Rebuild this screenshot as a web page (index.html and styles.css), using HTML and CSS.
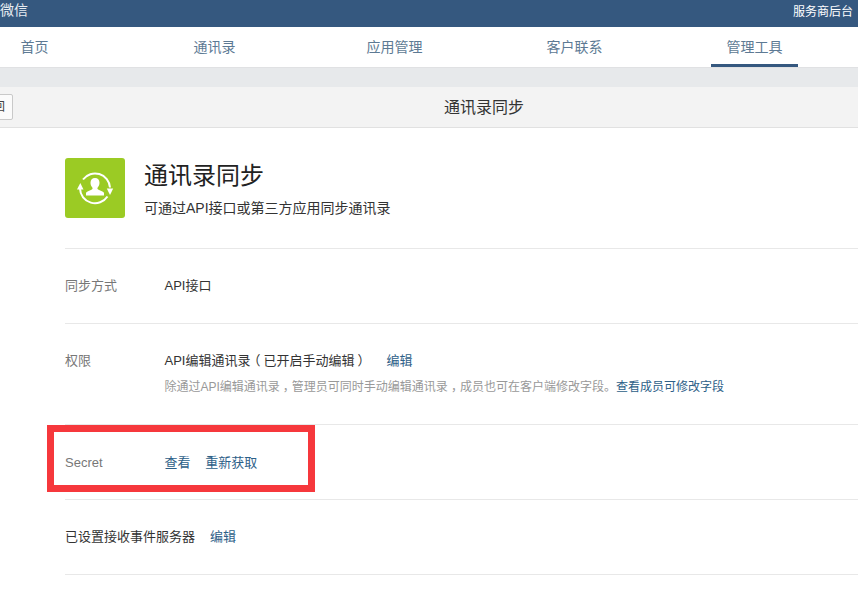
FILE: index.html
```html
<!DOCTYPE html>
<html lang="zh-CN">
<head>
    <meta charset="UTF-8">
    <meta name="viewport" content="width=device-width, initial-scale=1.0">
    <title>通讯录同步</title>
    <link rel="stylesheet" href="styles.css">
</head>
<body>
    <header class="topbar">
        <span class="brand">微信</span>
        <a class="provider" href="#">服务商后台</a>
    </header>

    <nav class="tabs">
        <a class="tab" href="#">首页</a>
        <a class="tab" href="#">通讯录</a>
        <a class="tab" href="#">应用管理</a>
        <a class="tab" href="#">客户联系</a>
        <a class="tab active" href="#">管理工具</a>
    </nav>

    <div class="band"></div>

    <section class="subhead">
        <a class="back" href="#">返回</a>
        <h2>通讯录同步</h2>
    </section>

    <main class="content">
        <div class="intro">
            <div class="app-icon">
                <svg width="40" height="40" viewBox="0 0 40 40">
                    <path d="M8 11.500A15 15 0 0 1 35 19.500" fill="none" stroke="#fff" stroke-width="2"/>
                    <path d="M32.500 28.500A15 15 0 0 1 5 20.500" fill="none" stroke="#fff" stroke-width="2"/>
                    <path d="M2 21.500L5.300 15 8.500 21.500z" fill="#fff"/>
                    <path d="M31.800 20.500L38.200 20.500 35 27z" fill="#fff"/>
                    <path d="M20 10c2.800 0 4.500 2 4.500 4.800 0 2-.8 3.700-1.800 4.800-.5.600-.4 1.500.4 2 1.800.9 4.900 1.700 5.900 3.200v2.700H11v-2.700c1-1.500 4.100-2.300 5.900-3.200.8-.5.9-1.400.4-2-1-1.100-1.800-2.800-1.800-4.800 0-2.800 1.700-4.800 4.500-4.800z" fill="#fff"/>
                </svg>
            </div>
            <div>
                <h1>通讯录同步</h1>
                <p>可通过API接口或第三方应用同步通讯录</p>
            </div>
        </div>

        <div class="row row-method">
            <span class="label">同步方式</span>
            <span class="value">API接口</span>
        </div>

        <div class="row row-perm">
            <span class="label">权限</span>
            <div class="value">
                <div>API编辑通讯录<span class="open">（</span>已开启手动编辑<span class="close">）</span><a class="link edit" href="#">编辑</a></div>
                <p class="hint">除通过API编辑通讯录<span class="comma">，</span>管理员可同时手动编辑通讯录<span class="comma">，</span>成员也可在客户端修改字段。<a class="link" href="#">查看成员可修改字段</a></p>
            </div>
        </div>

        <div class="row row-secret">
            <span class="label">Secret</span>
            <div class="value">
                <a class="link" href="#">查看</a>
                <a class="link refresh" href="#">重新获取</a>
            </div>
        </div>

        <div class="row row-server">
            <span class="server">已设置接收事件服务器</span>
            <a class="link" href="#">编辑</a>
        </div>
    </main>

    <div class="callout"></div>
</body>
</html>
```

FILE: styles.css
```css
html, body {
    height: 100%;
}

body {
    margin: 0;
    overflow: hidden;
    position: relative;
    background-color: #fff;
    color: #333;
    font-family: "Liberation Sans", "Noto Sans CJK SC", sans-serif;
    font-size: 13px;
}

a {
    text-decoration: none;
}

.topbar {
    height: 27px;
    background-color: #35587f;
    display: flex;
    justify-content: space-between;
    align-items: center;
    padding: 0 5px 6px 0;
    box-sizing: border-box;
}

.brand {
    color: #e8edf2;
    font-size: 14px;
    padding-bottom: 4px;
}

.provider {
    color: #fff;
    font-size: 12px;
}

.tabs {
    height: 40px;
    display: flex;
    gap: 93px;
    margin-left: -9px;
}

.tab {
    width: 87px;
    height: 40px;
    line-height: 40px;
    text-align: center;
    font-size: 14px;
    color: #5d7a94;
    box-sizing: border-box;
}

.tab.active {
    border-bottom: 3px solid #35587f;
}

.band {
    height: 20px;
    background-color: #e7e9eb;
    border-top: 1px solid #e0e1e3;
    box-sizing: border-box;
}

.subhead {
    height: 41px;
    background-color: #f3f3f3;
    border-bottom: 1px solid #e1e1e1;
    box-sizing: border-box;
    position: relative;
    text-align: center;
}

.subhead h2 {
    margin: 0;
    font-size: 16px;
    font-weight: normal;
    line-height: 42px;
    padding-left: 110px;
    color: #333;
}

.back {
    position: absolute;
    left: -27px;
    top: 7px;
    width: 38px;
    height: 24px;
    line-height: 24px;
    background-color: #fbfbfb;
    border: 1px solid #c9c9c9;
    border-radius: 2px;
    color: #444;
    font-size: 12px;
    text-align: center;
}

.content {
    margin-left: 65px;
}

.intro {
    height: 121px;
    display: flex;
    gap: 19px;
    padding-top: 30px;
    box-sizing: border-box;
    border-bottom: 1px solid #e8e8e8;
}

.intro h1 {
    margin: 1px 0 0;
    font-size: 24px;
    font-weight: normal;
    line-height: 34px;
    color: #222;
}

.intro p {
    margin: 6px 0 0;
    font-size: 14px;
    line-height: 18px;
    color: #333;
}

.app-icon {
    width: 60px;
    height: 60px;
    background-color: #9bcb24;
    border-radius: 3px;
    display: flex;
    align-items: center;
    justify-content: center;
}

.row {
    display: flex;
    box-sizing: border-box;
    border-bottom: 1px solid #e8e8e8;
    line-height: 18px;
}

.label {
    width: 99.5px;
    color: #777;
    flex-shrink: 0;
}

.row-method {
    height: 75px;
    padding-top: 28px;
}

.row-perm {
    height: 101px;
    padding-top: 28px;
}

.row-secret {
    height: 75px;
    padding-top: 29px;
}

.row-server {
    height: 75px;
    padding-top: 28px;
}

.value {
    color: #333;
}

/* the punctuation sits more centred in the reference than in this font */
.open, .close, .comma {
    display: inline-block;
}

.open {
    transform: translateX(-3px);
}

.close {
    transform: translateX(3px);
}

.comma {
    transform: translateX(3px);
}

.edit {
    margin-left: 19px;
}

.hint {
    margin: 8px 0 0;
    font-size: 12px;
    color: #999;
}

.link {
    color: #2d6088;
}

.refresh {
    margin-left: 11px;
}

.server {
    margin-right: 15px;
    color: #333;
}

.callout {
    position: absolute;
    left: 47px;
    top: 425px;
    width: 254px;
    height: 53px;
    border: 7px solid #f6383c;
}
```
